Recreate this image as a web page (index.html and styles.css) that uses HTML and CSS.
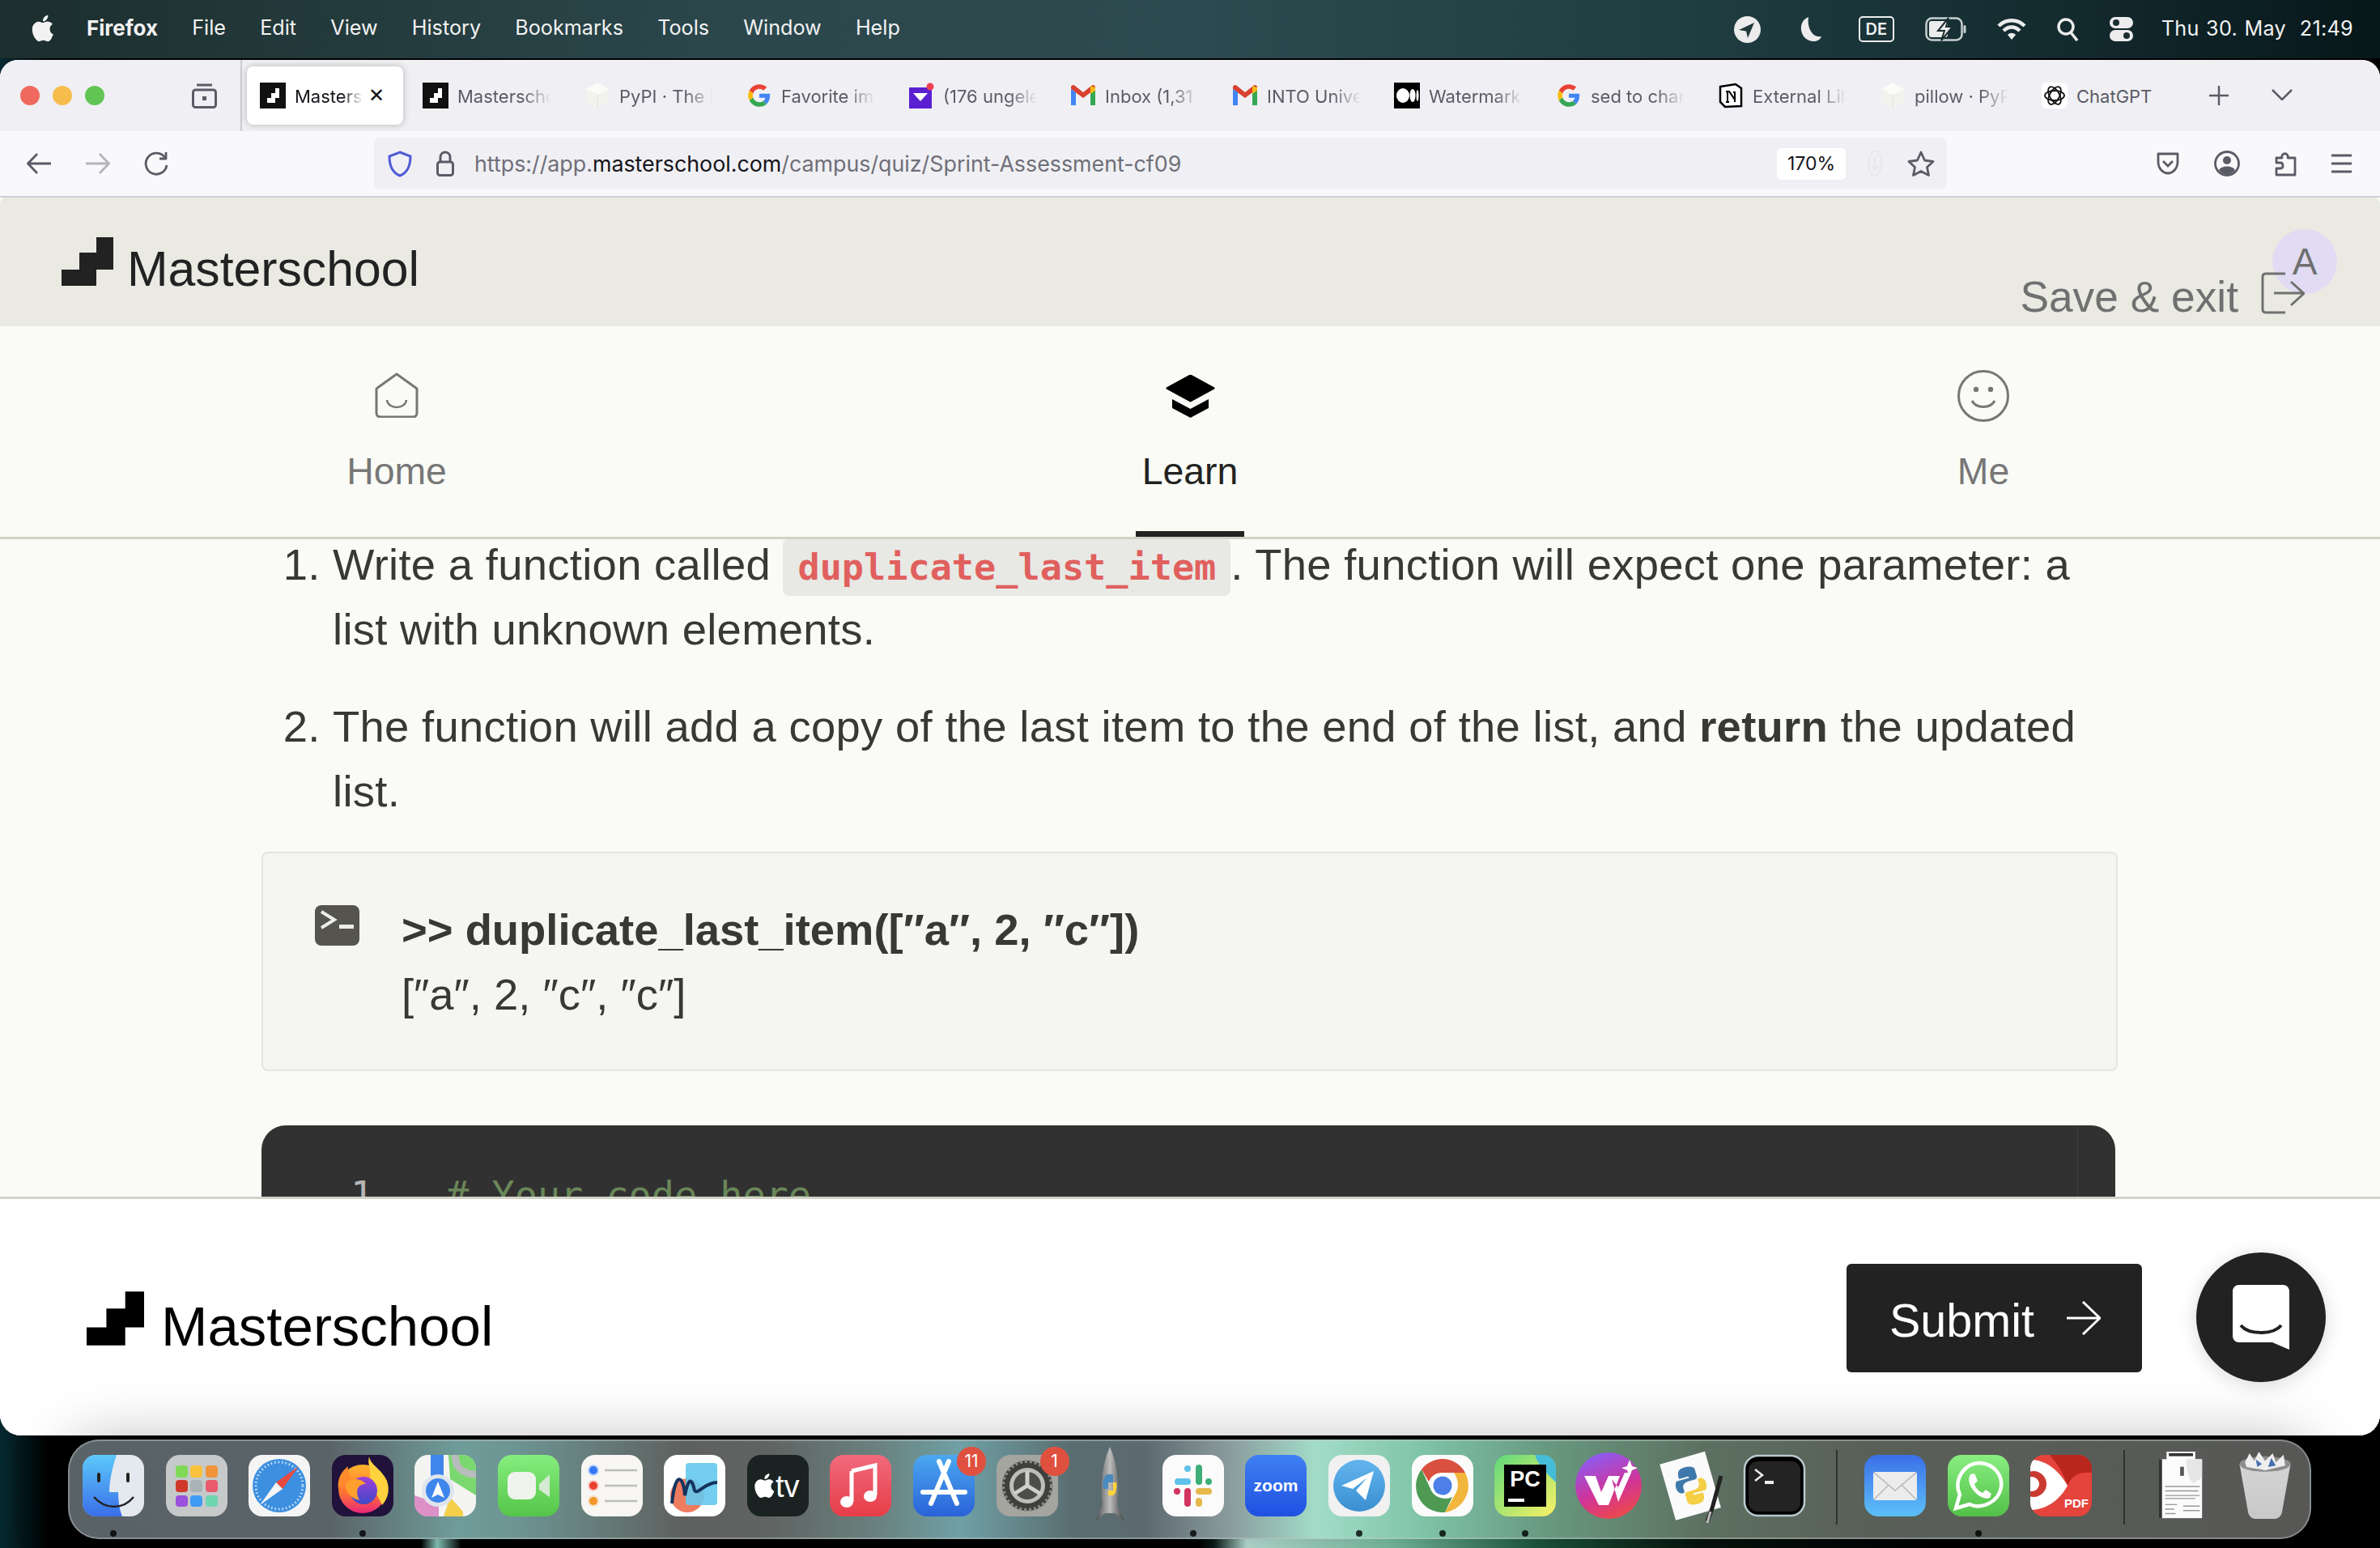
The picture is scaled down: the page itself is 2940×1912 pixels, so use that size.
FILE: index.html
```html
<!DOCTYPE html>
<html lang="en">
<head>
    <meta charset="UTF-8">
    <title>Masterschool - Sprint Assessment</title>
    <link rel="stylesheet" href="styles.css">
</head>
<body>
    <!-- shared icon shapes -->
    <svg class="icon-defs" width="0" height="0">
        <symbol id="stair" viewBox="0 0 64 60"><path d="M43 0H64V40H43V60H0V40H22V19H43Z"/></symbol>
        <symbol id="fav-ms" viewBox="0 0 32 32"><rect width="32" height="32" fill="#111"/><path d="M19 7h5v12h-5v6H9v-6h5v-6h5z" fill="#fff"/></symbol>
        <symbol id="fav-cube" viewBox="0 0 32 32"><path d="M16 0L30 8V24L16 32L2 24V8Z" fill="#f3f3ee"/><path d="M16 0L30 8L16 15L2 8Z" fill="#fbfbf8"/><path d="M16 15V32" stroke="#ddd" fill="none"/></symbol>
        <symbol id="fav-g" viewBox="-4 -4 56 56">
            <path fill="#EA4335" d="M24 9.5c3.54 0 6.71 1.22 9.21 3.6l6.85-6.85C35.9 2.38 30.47 0 24 0 14.62 0 6.51 5.38 2.56 13.22l7.98 6.19C12.43 13.72 17.74 9.5 24 9.5z"/>
            <path fill="#4285F4" d="M46.98 24.55c0-1.57-.15-3.09-.38-4.55H24v9.02h12.94c-.58 2.96-2.26 5.48-4.78 7.18l7.73 6c4.51-4.18 7.09-10.36 7.09-17.65z"/>
            <path fill="#FBBC05" d="M10.53 28.59c-.48-1.45-.76-2.99-.76-4.59s.27-3.14.76-4.59l-7.98-6.19C.92 16.46 0 20.12 0 24c0 3.88.92 7.54 2.56 10.78l7.97-6.19z"/>
            <path fill="#34A853" d="M24 48c6.48 0 11.93-2.13 15.89-5.81l-7.73-6c-2.15 1.45-4.92 2.3-8.16 2.3-6.26 0-11.57-4.22-13.47-9.91l-7.98 6.19C6.51 42.62 14.62 48 24 48z"/>
        </symbol>
        <symbol id="fav-gmail" viewBox="0 0 32 32">
            <path d="M1 8L16 19L31 8V6C31 3 28 2 26 4L16 12L6 4C4 2 1 3 1 6Z" fill="#d8412f"/>
            <path d="M1 8V28H7V12Z" fill="#4285f4"/><path d="M31 8V28H25V12Z" fill="#34a853"/><path d="M25 4L31 6V10L25 14Z" fill="#f6bb19"/>
        </symbol>
        <symbol id="apple" viewBox="0 0 24 24"><path d="M18.71 19.5c-.83 1.24-1.71 2.45-3.05 2.47-1.34.03-1.77-.79-3.29-.79-1.53 0-2 .77-3.27.82-1.31.05-2.3-1.32-3.14-2.53C4.25 17 2.94 12.45 4.7 9.39c.87-1.52 2.43-2.48 4.12-2.51 1.28-.02 2.5.87 3.29.87.78 0 2.21-1.07 3.73-.91.64.03 2.44.26 3.58 1.98-.09.06-2.14 1.25-2.12 3.73.03 2.97 2.61 3.96 2.64 3.97-.03.07-.42 1.44-1.38 2.83M13 3.5c.73-.83 1.94-1.46 2.94-1.5.13 1.17-.34 2.35-1.04 3.19-.69.85-1.83 1.51-2.95 1.42-.15-1.15.41-2.35 1.05-3.11z"/></symbol>
    </svg>

    <header class="menubar">
        <svg class="menu-apple" viewBox="3 1.500 18 21"><use href="#apple" width="24" height="24"/></svg>
        <nav class="menu-items">
            <span class="menu-app">Firefox</span>
            <span>File</span>
            <span>Edit</span>
            <span>View</span>
            <span>History</span>
            <span>Bookmarks</span>
            <span>Tools</span>
            <span>Window</span>
            <span>Help</span>
        </nav>
        <div class="status">
            <svg class="st-loc" viewBox="0 0 33 33"><circle cx="16.5" cy="16.5" r="16.5" fill="#ececec"/><path d="M25 8L6 17L15 18.5L17 27Z" fill="#22383a"/></svg>
            <svg class="st-moon" viewBox="0 0 28 32"><path d="M11 1C4 4 1 10 2 17C3 26 11 32 19 31C23 30.500 26 28 27 25C17 27 9 16 11 1Z" fill="#ececec"/></svg>
            <span class="st-de">DE</span>
            <svg class="st-batt" viewBox="0 0 51 30"><rect x="1.500" y="1.500" width="44" height="27" rx="7" fill="none" stroke="#c8cfcf" stroke-width="2.500"/><rect x="5" y="5" width="23" height="20" rx="3" fill="#ececec"/><rect x="47.500" y="10" width="3" height="10" rx="1.500" fill="#c8cfcf"/><path d="M29 1L16 17H24L20 29L34 12H26Z" fill="#ececec" stroke="#1a2d30" stroke-width="2"/></svg>
            <svg class="st-wifi" viewBox="0 0 36 28" fill="none" stroke="#ececec" stroke-width="4.500"><path d="M2 10C11 1 25 1 34 10"/><path d="M8 16C14 10 22 10 28 16"/><path d="M18 27L13 21C16 18 20 18 23 21Z" fill="#ececec" stroke="none"/></svg>
            <svg class="st-search" viewBox="0 0 27 30" fill="none" stroke="#ececec" stroke-width="3.500"><circle cx="11" cy="12" r="9"/><path d="M17 19L25 29"/></svg>
            <svg class="st-ctrl" viewBox="0 0 29 30"><rect width="29" height="14" rx="7" fill="#ececec"/><circle cx="8" cy="7" r="4" fill="#1a2d30"/><rect y="16" width="29" height="14" rx="7" fill="#ececec"/><circle cx="21" cy="23" r="4" fill="#1a2d30"/></svg>
            <span class="st-clock">Thu 30. May&nbsp;&nbsp;21:49</span>
        </div>
    </header>

    <div class="window">
        <div class="tabbar">
            <div class="tab-left">
                <div class="traffic">
                    <i class="dot-red"></i><i class="dot-yellow"></i><i class="dot-green"></i>
                </div>
                <svg class="fx-view" viewBox="0 0 31 31" fill="none" stroke="#5b5b66" stroke-width="3"><path d="M6 2H25"/><rect x="1.500" y="8" width="28" height="21.500" rx="3"/><rect x="13" y="16" width="5" height="5" fill="#5b5b66" stroke="none"/></svg>
            </div>
            <div class="tabs">
                <div class="tab tab-active"><svg class="fav"><use href="#fav-ms"/></svg><span class="tab-title">Masters</span><span class="tab-close">✕</span></div>
                <div class="tab"><svg class="fav"><use href="#fav-ms"/></svg><span class="tab-title">Masterscho</span></div>
                <div class="tab"><svg class="fav"><use href="#fav-cube"/></svg><span class="tab-title">PyPI · The P</span></div>
                <div class="tab"><svg class="fav"><use href="#fav-g"/></svg><span class="tab-title">Favorite im</span></div>
                <div class="tab"><svg class="fav" viewBox="0 0 32 32"><rect x="1" y="6" width="28" height="26" fill="#5a1fd1"/><path d="M6 13H24L15 23Z" fill="#fff"/><circle cx="27" cy="5" r="4.500" fill="#ef4056"/></svg><span class="tab-title">(176 ungele</span></div>
                <div class="tab"><svg class="fav"><use href="#fav-gmail"/></svg><span class="tab-title">Inbox (1,31</span></div>
                <div class="tab"><svg class="fav"><use href="#fav-gmail"/></svg><span class="tab-title">INTO Unive</span></div>
                <div class="tab"><svg class="fav" viewBox="0 0 32 32"><rect width="32" height="32" fill="#000"/><ellipse cx="11" cy="16" rx="8" ry="9" fill="#fff"/><ellipse cx="23" cy="16" rx="3.500" ry="8" fill="#fff"/><ellipse cx="29" cy="16" rx="1.500" ry="7" fill="#fff"/></svg><span class="tab-title">Watermark</span></div>
                <div class="tab"><svg class="fav"><use href="#fav-g"/></svg><span class="tab-title">sed to char</span></div>
                <div class="tab"><svg class="fav" viewBox="0 0 32 32"><path d="M3 5L22 2L29 7V29L9 30L3 24Z" fill="#fff" stroke="#000" stroke-width="2.500"/><path d="M10 11H14L21 21V12H19M10 11H13M12 11V24M10 24H14M22 12H19M21 21V24" fill="none" stroke="#000" stroke-width="2"/></svg><span class="tab-title">External Lil</span></div>
                <div class="tab"><svg class="fav"><use href="#fav-cube"/></svg><span class="tab-title">pillow · PyP</span></div>
                <div class="tab"><svg class="fav" viewBox="0 0 32 32"><rect width="32" height="32" rx="6" fill="#fff"/><g fill="none" stroke="#111" stroke-width="1.800"><ellipse cx="16" cy="16" rx="12" ry="6" transform="rotate(60 16 16)"/><ellipse cx="16" cy="16" rx="12" ry="6" transform="rotate(120 16 16)"/><ellipse cx="16" cy="16" rx="12" ry="6"/></g></svg><span class="tab-title tab-title-full">ChatGPT</span></div>
            </div>
            <svg class="tab-new" viewBox="0 0 26 26" stroke="#5b5b66" stroke-width="2.500"><path d="M13 1V25M1 13H25"/></svg>
            <svg class="tab-list" viewBox="0 0 26 14" fill="none" stroke="#5b5b66" stroke-width="2.500"><path d="M1 1L13 13L25 1"/></svg>
        </div>

        <div class="toolbar">
            <svg class="tool-back" viewBox="0 0 30 26" fill="none" stroke="#5b5b66" stroke-width="2.800"><path d="M30 13H2M13 1L1.500 13L13 25"/></svg>
            <svg class="tool-forward" viewBox="0 0 30 26" fill="none" stroke="#b4b4ba" stroke-width="2.800"><path d="M0 13H28M17 1L28.500 13L17 25"/></svg>
            <svg class="tool-reload" viewBox="0 0 30 30" fill="none" stroke="#5b5b66" stroke-width="2.800"><path d="M26 8A13 13 0 1 0 28 17"/><path d="M27 1V9H19" stroke-linejoin="round"/></svg>
            <div class="urlbar">
                <svg class="url-shield" viewBox="0 0 30 33" fill="none" stroke="#4f5bd5" stroke-width="3"><path d="M15 2L28 7C28 18 25 27 15 31C5 27 2 18 2 7Z"/></svg>
                <svg class="url-lock" viewBox="0 0 22 32" fill="none" stroke="#5b5b66" stroke-width="3"><path d="M5 14V8C5 0 17 0 17 8V14"/><rect x="1.500" y="14" width="19" height="16.500" rx="3"/></svg>
                <span class="url-text">https://app.<b>masterschool.com</b>/campus/quiz/Sprint-Assessment-cf09</span>
                <span class="url-zoom">170%</span>
                <svg class="url-faint" viewBox="0 0 18 32" fill="none" stroke="#e6e6ea" stroke-width="1.500"><ellipse cx="9" cy="16" rx="8" ry="15"/><path d="M9 8V24M5 19L9 25L13 19"/></svg>
                <svg class="url-star" viewBox="0 0 34 32" fill="none" stroke="#5b5b66" stroke-width="2.800" stroke-linejoin="round"><path d="M17 2L21.500 12L32 13.500L24.500 20.500L26.500 30.500L17 25.500L7.500 30.500L9.500 20.500L2 13.500L12.500 12Z"/></svg>
            </div>
            <div class="tool-right">
                <svg class="tool-pocket" viewBox="0 0 28 28" fill="none" stroke="#5b5b66" stroke-width="2.800"><path d="M2 2H26V12C26 20 20 26 14 26C8 26 2 20 2 12Z" stroke-linejoin="round"/><path d="M8 11L14 17L20 11"/></svg>
                <svg class="tool-account" viewBox="0 0 32 32" fill="none" stroke="#5b5b66" stroke-width="2.800"><circle cx="16" cy="16" r="14.500"/><circle cx="16" cy="12" r="5" fill="#5b5b66" stroke="none"/><path d="M6 24C9 18 23 18 26 24C22 31 10 31 6 24Z" fill="#5b5b66" stroke="none"/></svg>
                <svg class="tool-ext" viewBox="0 0 27 32" fill="none" stroke="#5b5b66" stroke-width="2.800" stroke-linejoin="round"><path d="M2 9H9C7 2 18 2 16 9H25V30H2V22H7C11 22 11 15 7 15H2Z"/></svg>
                <svg class="tool-menu" viewBox="0 0 25 24" stroke="#5b5b66" stroke-width="2.800"><path d="M0 2H25M0 12H25M0 22H25"/></svg>
            </div>
        </div>

        <div class="site">
            <div class="site-header">
                <div class="brand">
                    <svg class="brand-mark"><use href="#stair"/></svg>
                    <span class="brand-name">Masterschool</span>
                </div>
                <div class="save-exit">
                    <span>Save &amp; exit</span>
                    <svg class="save-icon" viewBox="0 0 54 52" fill="none" stroke="#707070" stroke-width="3"><path d="M30 2H6C3.500 2 2 3.500 2 6V46C2 48.500 3.500 50 6 50H30"/><path d="M16 26H52M37 12L53 26.500L37 41"/></svg>
                </div>
                <div class="avatar">A</div>
            </div>

            <nav class="site-nav">
                <a class="nav-item">
                    <span class="nav-icon">
                        <svg class="ic-home" viewBox="0 0 54 56" fill="none" stroke="#777" stroke-width="3"><path d="M27 2L52 20V50C52 53 50 55 47 55H7C4 55 2 53 2 50V20Z" stroke-linejoin="round"/><path d="M15 34C16 46 38 46 39 34" stroke-width="2.500"/></svg>
                    </span>
                    <span class="nav-label">Home</span>
                </a>
                <a class="nav-item nav-active">
                    <span class="nav-icon">
                        <svg class="ic-learn" viewBox="0 0 61 53"><path d="M30.500 1L59 16.500L30.500 32L2 16.500Z" stroke="#000" stroke-width="3" stroke-linejoin="round"/><path d="M8 30L30.500 42L53 30V41L30.500 53L8 41Z"/></svg>
                    </span>
                    <span class="nav-label">Learn</span>
                </a>
                <a class="nav-item">
                    <span class="nav-icon">
                        <svg class="ic-me" viewBox="0 0 64 64" fill="none" stroke="#777" stroke-width="3"><circle cx="32" cy="32" r="30.500"/><circle cx="23" cy="24" r="3.200" fill="#777" stroke="none"/><circle cx="41" cy="24" r="3.200" fill="#777" stroke="none"/><path d="M18 38C23 48 41 48 46 38"/></svg>
                    </span>
                    <span class="nav-label">Me</span>
                </a>
            </nav>

            <main class="content">
                <div class="content-scroll">
                    <ol class="steps">
                        <li>Write a function called <code class="inline-code">duplicate_last_item</code>. The function will expect one parameter: a list with unknown elements.</li>
                        <li>The function will add a copy of the last item to the end of the list, and <strong>return</strong> the updated list.</li>
                    </ol>
                    <div class="example">
                        <svg class="example-icon" viewBox="0 0 55 50"><rect width="55" height="50" rx="8" fill="#55544f"/><path d="M8 8L24 18L8 28" fill="none" stroke="#ecece8" stroke-width="4"/><rect x="30" y="24" width="18" height="5" fill="#ecece8"/></svg>
                        <div class="example-text">
                            <div class="example-in">&gt;&gt; duplicate_last_item([″a″, 2, ″c″])</div>
                            <div>[″a″, 2, ″c″, ″c″]</div>
                        </div>
                    </div>
                    <div class="editor">
                        <span class="line-no">1</span>
                        <span class="line-code"># Your code here</span>
                    </div>
                </div>
            </main>

            <footer class="site-footer">
                <div class="foot-brand">
                    <svg class="foot-mark"><use href="#stair"/></svg>
                    <span class="foot-name">Masterschool</span>
                </div>
                <button class="submit" type="button">
                    <span class="submit-label">Submit</span>
                    <svg class="submit-arrow" viewBox="0 0 42 42" fill="none" stroke="#fff" stroke-width="3"><path d="M0 21H41M20 1L41 21L20 41"/></svg>
                </button>
                <div class="chat-btn">
                    <svg viewBox="0 0 70 80"><path d="M8 0H62C66.500 0 70 3.500 70 8V80L49 71H8C3.500 71 0 67.500 0 63V8C0 3.500 3.500 0 8 0Z" fill="#fff"/><path d="M10 50C20 62 50 62 60 50" fill="none" stroke="#222" stroke-width="4"/></svg>
                </div>
            </footer>
        </div>
    </div>

    <div class="dock">
        <div class="app running">
            <svg viewBox="0 0 76 76"><defs><linearGradient id="finder" x1="0" y1="0" x2="0" y2="1"><stop offset="0" stop-color="#5cc8fa"/><stop offset="1" stop-color="#3a6fe8"/></linearGradient></defs><rect width="76" height="76" rx="17" fill="#e4e8ef"/><path d="M17 0H42C36 18 33 34 33 46H44C44 58 46 68 49 76H17C7 76 0 69 0 59V17C0 7 7 0 17 0Z" fill="url(#finder)"/><rect x="18" y="22" width="4" height="12" rx="2" fill="#222"/><rect x="54" y="22" width="4" height="12" rx="2" fill="#222"/><path d="M14 52C28 68 50 68 63 52" fill="none" stroke="#222" stroke-width="2.500"/></svg>
        </div>
        <div class="app">
            <svg viewBox="0 0 76 76"><rect width="76" height="76" rx="17" fill="#c5c9c9"/><rect x="12" y="13" width="15" height="15" rx="4" fill="#7ed957"/><rect x="30" y="13" width="15" height="15" rx="4" fill="#f9c23c"/><rect x="49" y="13" width="15" height="15" rx="4" fill="#f0943a"/><rect x="12" y="31" width="15" height="15" rx="4" fill="#cf3a2c"/><rect x="30" y="31" width="15" height="15" rx="4" fill="#a9b2b5"/><rect x="49" y="31" width="15" height="15" rx="4" fill="#ea5a6c"/><rect x="12" y="50" width="15" height="14" rx="4" fill="#9a52dc"/><rect x="30" y="50" width="15" height="14" rx="4" fill="#3f9bf5"/><rect x="49" y="50" width="15" height="14" rx="4" fill="#6fd4b0"/></svg>
        </div>
        <div class="app">
            <svg viewBox="0 0 76 76"><rect width="76" height="76" rx="17" fill="#f4f4f4"/><circle cx="38" cy="38" r="33" fill="#3d8fe0"/><circle cx="38" cy="38" r="29" fill="none" stroke="#cfe4f7" stroke-width="3" stroke-dasharray="1.500 3"/><path d="M62 14L34 34L42 42Z" fill="#e8493f"/><path d="M14 62L34 34L42 42Z" fill="#f5f5f5"/></svg>
        </div>
        <div class="app running">
            <svg viewBox="0 0 76 76"><defs><linearGradient id="fox" x1="0.500" y1="0" x2="0.500" y2="1"><stop offset="0" stop-color="#ffb52e"/><stop offset="0.600" stop-color="#ff6f33"/><stop offset="1" stop-color="#e8267a"/></linearGradient><linearGradient id="foxc" x1="0.500" y1="0" x2="0.500" y2="1"><stop offset="0" stop-color="#a03fd8"/><stop offset="1" stop-color="#3f4ac8"/></linearGradient></defs><rect width="76" height="76" rx="17" fill="#20123a"/><circle cx="38" cy="42" r="30" fill="url(#fox)"/><path d="M46 2C47 12 62 18 68 32C72 44 69 54 62 62L46 30C50 20 43 12 46 2Z" fill="#ffd23e"/><path d="M20 14C18 22 24 24 22 30C16 34 10 36 8 42C6 30 12 20 20 14Z" fill="#ff8a2b"/><circle cx="39" cy="44" r="17" fill="url(#foxc)"/><path d="M17 36C24 28 36 28 42 36C32 36 28 44 34 56C24 54 16 46 17 36Z" fill="#ffa02e"/></svg>
        </div>
        <div class="app">
            <svg viewBox="0 0 76 76"><rect width="76" height="76" rx="17" fill="#f4f4f2"/><path d="M42 0H59C69 0 76 7 76 17V50L44 30Z" fill="#7bd870"/><path d="M0 50V59C0 69 7 76 17 76H30V60Z" fill="#dd8fc8"/><path d="M36 76H60V70L44 52Z" fill="#f5cf4a"/><path d="M20 0H36V36H20Z" fill="#3f86ec"/><path d="M50 0C50 16 60 24 76 24" fill="none" stroke="#b9bcbc" stroke-width="9"/><circle cx="29" cy="44" r="20" fill="#dfe5ec"/><circle cx="29" cy="44" r="15" fill="#3f86ec"/><path d="M29 33L37 53L29 49L21 53Z" fill="#fff"/></svg>
        </div>
        <div class="app">
            <svg viewBox="0 0 76 76"><defs><linearGradient id="ft" x1="0" y1="0" x2="0" y2="1"><stop offset="0" stop-color="#86ee7e"/><stop offset="1" stop-color="#55c549"/></linearGradient></defs><rect width="76" height="76" rx="17" fill="url(#ft)"/><rect x="12" y="21" width="35" height="34" rx="9" fill="#eef4ec"/><path d="M51 36L64 24V52L51 43Z" fill="#d5ead2"/></svg>
        </div>
        <div class="app">
            <svg viewBox="0 0 76 76"><rect width="76" height="76" rx="17" fill="#f7f6f3"/><circle cx="15" cy="19" r="6" fill="#3478f6" stroke="#bcd4fa" stroke-width="2"/><circle cx="15" cy="38" r="6" fill="#e8402f" stroke="#f9cdc8" stroke-width="2"/><circle cx="15" cy="57" r="6" fill="#f0962b" stroke="#fbe0c0" stroke-width="2"/><path d="M29 19H69M29 38H69M29 57H69" stroke="#bdbdbd" stroke-width="2.500"/></svg>
        </div>
        <div class="app">
            <svg viewBox="0 0 76 76"><rect width="76" height="76" rx="17" fill="#fff"/><circle cx="29" cy="50" r="21" fill="#ee7c5e"/><rect x="27" y="10" width="39" height="52" rx="4" fill="#64c9f0" opacity="0.900"/><path d="M10 60C14 20 24 24 26 50C30 30 34 26 38 44C42 50 50 34 66 34" fill="none" stroke="#12345e" stroke-width="4"/></svg>
        </div>
        <div class="app">
            <svg viewBox="0 0 76 76"><rect width="76" height="76" rx="17" fill="#1a2321"/><svg x="8" y="22" width="27" height="32" viewBox="3 1.500 18 21" fill="#fff"><use href="#apple" width="24" height="24"/></svg><text x="35" y="52" class="svg-tv">tv</text></svg>
        </div>
        <div class="app">
            <svg viewBox="0 0 76 76"><defs><linearGradient id="music" x1="0" y1="0" x2="0" y2="1"><stop offset="0" stop-color="#f16a7c"/><stop offset="1" stop-color="#e63d48"/></linearGradient></defs><rect width="76" height="76" rx="17" fill="url(#music)"/><path d="M27 20L56 13V50" fill="none" stroke="#fff" stroke-width="5"/><path d="M27 20V58" fill="none" stroke="#fff" stroke-width="5"/><ellipse cx="21" cy="58" rx="8" ry="7" fill="#fff"/><ellipse cx="50" cy="51" rx="8" ry="7" fill="#fff"/></svg>
        </div>
        <div class="app">
            <svg viewBox="0 0 76 76"><defs><linearGradient id="store" x1="0" y1="0" x2="0" y2="1"><stop offset="0" stop-color="#4aa8f0"/><stop offset="1" stop-color="#2a62d8"/></linearGradient></defs><rect width="76" height="76" rx="17" fill="url(#store)"/><path d="M44 8L22 60M32 8L54 60M12 46H64" stroke="#fff" stroke-width="6" stroke-linecap="round"/></svg>
            <span class="badge">11</span>
        </div>
        <div class="app">
            <svg viewBox="0 0 76 76"><rect width="76" height="76" rx="17" fill="#a5a5a0"/><circle cx="38" cy="38" r="31" fill="#3f3f3e"/><circle cx="38" cy="38" r="30" fill="none" stroke="#8b8b88" stroke-width="4" stroke-dasharray="3 3"/><circle cx="38" cy="38" r="22" fill="#bdbdb9"/><circle cx="38" cy="38" r="17" fill="#4d4d4b"/><path d="M38 38L38 20M38 38L22 48M38 38L54 48" stroke="#cfcfcb" stroke-width="5"/></svg>
            <span class="badge">1</span>
        </div>
        <div class="app">
            <svg viewBox="0 0 76 76"><defs><linearGradient id="rocket" x1="0" y1="0" x2="1" y2="0"><stop offset="0" stop-color="#4a4a4a"/><stop offset="0.500" stop-color="#bdbdbd"/><stop offset="1" stop-color="#3f3f3f"/></linearGradient></defs><path d="M38 -10C48 12 50 40 47 62L56 82L44 72H32L20 82L29 62C26 40 28 12 38 -10Z" fill="url(#rocket)"/><path d="M34 24H42V34H36V42H30C28 34 30 28 34 24Z" fill="#4b8bbe"/><path d="M42 34V44H36V50H42C46 48 47 40 46 34Z" fill="#ffd43b"/></svg>
        </div>
        <div class="app running">
            <svg viewBox="0 0 76 76"><rect width="76" height="76" rx="17" fill="#fbfbfb"/><rect x="15" y="30" width="20" height="8" rx="4" fill="#5ec2ea" transform="translate(0 -1)"/><rect x="27" y="13" width="8" height="8" rx="4" fill="#5ec2ea"/><rect x="41" y="12" width="8" height="25" rx="4" fill="#3fae76"/><rect x="53" y="29" width="8" height="8" rx="4" fill="#3fae76"/><rect x="41" y="41" width="20" height="8" rx="4" fill="#e6b84c"/><rect x="41" y="53" width="8" height="11" rx="4" fill="#e6b84c"/><rect x="27" y="41" width="8" height="23" rx="4" fill="#d2355f"/><rect x="14" y="41" width="8" height="8" rx="4" fill="#d2355f"/></svg>
        </div>
        <div class="app">
            <svg viewBox="0 0 76 76"><defs><linearGradient id="zoomapp" x1="0" y1="0" x2="0" y2="1"><stop offset="0" stop-color="#3f80f2"/><stop offset="1" stop-color="#1f50e2"/></linearGradient></defs><rect width="76" height="76" rx="17" fill="url(#zoomapp)"/><text x="38" y="45" class="svg-zoom">zoom</text></svg>
        </div>
        <div class="app running">
            <svg viewBox="0 0 76 76"><defs><linearGradient id="tg" x1="0" y1="0" x2="0" y2="1"><stop offset="0" stop-color="#63b4ee"/><stop offset="1" stop-color="#3a8fd0"/></linearGradient></defs><rect width="76" height="76" rx="17" fill="#f1f1f1"/><circle cx="38" cy="38" r="32" fill="url(#tg)"/><path d="M56 20L16 38L30 42L48 28L34 44L46 56Z" fill="#fff"/></svg>
        </div>
        <div class="app running">
            <svg viewBox="0 0 76 76"><rect width="76" height="76" rx="17" fill="#fbfbfb"/><path d="M38 5C50 5 61 12 66 22H38C30 22 24 26 21 33L12 18C18 10 28 5 38 5Z" fill="#d9503f"/><path d="M66 22C72 34 71 48 63 58C58 65 49 70 41 71L55 46C58 40 58 31 52 22Z" fill="#f2b63c"/><path d="M12 18C3 30 3 46 11 57C17 66 29 72 41 71L50 52C42 56 30 54 24 44Z" fill="#4e9a53"/><circle cx="38" cy="38" r="15" fill="#fff"/><circle cx="38" cy="38" r="11.500" fill="#4c80e8"/></svg>
        </div>
        <div class="app running">
            <svg viewBox="0 0 76 76"><defs><linearGradient id="pycharm" x1="0" y1="0" x2="1" y2="1"><stop offset="0" stop-color="#5fd97a"/><stop offset="1" stop-color="#fbf066"/></linearGradient></defs><rect width="76" height="76" rx="17" fill="url(#pycharm)"/><path d="M50 0H59C69 0 76 7 76 17V34C62 20 54 12 50 0Z" fill="#45bcd8"/><rect x="12" y="12" width="52" height="52" fill="#000"/><text x="38" y="39" class="svg-pc">PC</text><rect x="17" y="54" width="20" height="4" fill="#fff"/></svg>
        </div>
        <div class="app">
            <svg class="app-big" viewBox="0 0 84 84"><defs><linearGradient id="wapp" x1="0.300" y1="0" x2="0.700" y2="1"><stop offset="0" stop-color="#8a5cf6"/><stop offset="0.550" stop-color="#d0349a"/><stop offset="1" stop-color="#ee4a45"/></linearGradient></defs><circle cx="42" cy="42" r="41" fill="url(#wapp)"/><path d="M12 30H26L33 50L42 30H56L42 66H30ZM46 34L54 62L70 26H62L54 44Z" fill="#fff"/><path d="M68 10L71 18L78 20L71 23L68 30L65 23L58 20L65 18Z" fill="#fff"/></svg>
        </div>
        <div class="app">
            <svg class="app-big" viewBox="0 0 84 84"><g transform="rotate(-16 42 42)"><rect x="12" y="6" width="58" height="72" fill="#fafafa"/><path d="M40 18C30 18 30 24 30 30H42V32H26C22 36 22 46 28 48H32V42C32 38 36 36 40 36H48C51 36 52 34 52 32V24C52 20 46 18 40 18Z" fill="#3f79ab"/><path d="M44 66C54 66 54 60 54 54H42V52H58C62 48 62 38 56 36H52V42C52 46 48 48 44 48H36C33 48 32 50 32 52V60C32 64 38 66 44 66Z" fill="#f4cf46"/></g><path d="M79 30L68 70L62 86" fill="none" stroke="#222" stroke-width="5"/><path d="M66 74L62 88" stroke="#bbb" stroke-width="3"/></svg>
        </div>
        <div class="app">
            <svg viewBox="0 0 76 76"><rect x="1" y="1" width="74" height="74" rx="17" fill="#000" stroke="#b8c8cc" stroke-width="2.500"/><rect x="6" y="8" width="64" height="62" rx="11" fill="#232323"/><path d="M14 18L23 25L14 32" fill="none" stroke="#eee" stroke-width="2.500"/><rect x="26" y="32" width="11" height="4" fill="#eee"/></svg>
        </div>
        <i class="dock-sep"></i>
        <div class="app">
            <svg viewBox="0 0 76 76"><defs><linearGradient id="mail" x1="0" y1="0" x2="0" y2="1"><stop offset="0" stop-color="#3b6fe8"/><stop offset="1" stop-color="#5cc0f8"/></linearGradient></defs><rect width="76" height="76" rx="17" fill="url(#mail)"/><rect x="11" y="21" width="54" height="35" rx="3" fill="#ececec"/><path d="M12 22L38 44L64 22M12 55L30 37M64 55L46 37" fill="none" stroke="#b6b6b6" stroke-width="1.500"/></svg>
        </div>
        <div class="app running">
            <svg viewBox="0 0 76 76"><defs><linearGradient id="wa" x1="0" y1="0" x2="0" y2="1"><stop offset="0" stop-color="#88ee80"/><stop offset="1" stop-color="#52c048"/></linearGradient></defs><rect width="76" height="76" rx="17" fill="url(#wa)"/><path d="M10 66L15 49C6 30 22 9 40 10C58 11 68 26 66 40C63 58 42 68 27 61Z" fill="none" stroke="#fff" stroke-width="4.500"/><path d="M28 24L33 23L37 32L33 36C35 42 39 45 43 47L47 43L54 48L52 53C42 58 20 38 28 24Z" fill="#fff"/></svg>
        </div>
        <div class="app">
            <svg viewBox="0 0 76 76"><defs><clipPath id="pdfclip"><rect width="76" height="76" rx="17"/></clipPath></defs><g clip-path="url(#pdfclip)"><rect width="76" height="76" fill="#e5443c"/><path d="M24 0H76V22C58 20 50 28 46 38C38 14 28 6 24 0Z" fill="#b9261d"/><path d="M0 6C20 6 36 20 46 38C36 56 20 68 0 68Z" fill="#fff"/><circle cx="4" cy="36" r="16" fill="#c93a31"/><circle cx="2" cy="36" r="9" fill="#fff"/></g><text x="57" y="65" class="svg-pdf">PDF</text></svg>
        </div>
        <i class="dock-sep"></i>
        <div class="app">
            <svg class="app-big" viewBox="0 0 60 90"><rect x="10" y="0" width="38" height="12" fill="#fff"/><rect x="13" y="2" width="32" height="4" fill="#333"/><rect x="1" y="10" width="56" height="78" fill="#fbfbfb"/><rect x="0" y="10" width="4" height="78" fill="#333"/><path d="M36 10H57V34L46 42C40 38 36 28 36 10Z" fill="#e6e6e6"/><rect x="28" y="20" width="5" height="12" fill="#555"/><path d="M8 46H54M8 52H52M8 58H54M8 62H48M8 70H24M8 76H20M32 72H54M32 78H54M8 82H22" stroke="#999" stroke-width="1.500"/></svg>
        </div>
        <div class="app">
            <svg class="app-big" viewBox="0 0 68 88"><defs><linearGradient id="trash" x1="0" y1="0" x2="0" y2="1"><stop offset="0" stop-color="#d4d4d4"/><stop offset="1" stop-color="#c8c8c8"/></linearGradient></defs><path d="M1 16L12 78C13 84 18 87 22 87H46C50 87 55 84 56 78L67 16Z" fill="url(#trash)"/><ellipse cx="34" cy="16" rx="33" ry="10" fill="#8e8e8e"/><path d="M8 14L14 2L20 12L26 0L34 12L44 2L48 14L58 4L60 18L34 24L10 20Z" fill="#eee"/><path d="M22 10L30 16L24 20ZM42 8L48 18L38 20Z" fill="#4a6fb0"/></svg>
        </div>
    </div>
</body>
</html>
```

FILE: styles.css
```css
* {
    box-sizing: border-box;
}
html, body {
    margin: 0;
    padding: 0;
}
body {
    width: 2940px;
    height: 1912px;
    overflow: hidden;
    font-family: "Liberation Sans", Arial, sans-serif;
    background:
        linear-gradient(90deg, #062a32 0, #000 60px, #000 520px, #8fd3c6 540px, #000 570px, #000 1480px, #0c1e1a 1500px, #bfe8dc 1540px, #7cc4a8 1720px, #1d5a40 1900px, #06140e 2100px, #000 2400px) bottom / 100% 11px no-repeat,
        linear-gradient(90deg, #062a32 0, #000 60px, #000 2940px);
}
.icon-defs {
    position: absolute;
}

/* mac menu bar */
.menubar {
    height: 72px;
    display: flex;
    align-items: center;
    padding-left: 38px;
    color: #f2f2f2;
    font-family: Inter, "Liberation Sans", sans-serif;
    font-size: 25.2px;
    background: linear-gradient(90deg, #1c2e2d 0, #2b474c 30%, #2d4a50 50%, #1f3c41 72%, #132a2e 87%, #07171a 100%);
}
.menu-apple {
    width: 30px;
    height: 34px;
    margin-top: -2px;
    fill: #f2f2f2;
}
.menu-items {
    display: flex;
    gap: 42.2px;
    margin: -3px 0 0 39px;
}
.menu-app {
    font-size: 26px;
    font-weight: 700;
}
.status {
    margin-left: auto;
    padding-right: 33px;
    display: flex;
    align-items: center;
    gap: 38px;
}
.st-loc { width: 33px; height: 33px; }
.st-moon { width: 28px; height: 32px; margin-left: 10px; }
.st-de {
    width: 44px;
    height: 32px;
    margin-left: 7px;
    border: 2px solid #ececec;
    border-radius: 5px;
    font-size: 20px;
    font-weight: 600;
    line-height: 28px;
    text-align: center;
}
.st-batt { width: 51px; height: 30px; }
.st-wifi { width: 36px; height: 28px; }
.st-search { width: 27px; height: 30px; }
.st-ctrl { width: 29px; height: 30px; }
.st-clock {
    margin: -3px 0 0 -3px;
    letter-spacing: 0.3px;
    word-spacing: 1px;
}

/* browser */
.window {
    margin-top: 2px;
    height: 1699px;
    display: flex;
    flex-direction: column;
    overflow: hidden;
    border-radius: 22px 22px 26px 26px;
    background: #fff;
}
.tabbar {
    height: 88px;
    flex: none;
    display: flex;
    align-items: center;
    background: #f0f0f4;
    font-family: Inter, "Liberation Sans", sans-serif;
}
.tab-left {
    width: 299px;
    height: 88px;
    flex: none;
    display: flex;
    align-items: center;
    padding-left: 25px;
    border-right: 2px solid #c9c9cf;
}
.traffic {
    display: flex;
    gap: 16px;
}
.traffic i {
    width: 24px;
    height: 24px;
    border-radius: 50%;
}
.dot-red { background: #f0695e; }
.dot-yellow { background: #f7bd4c; }
.dot-green { background: #61c554; }
.fx-view {
    width: 31px;
    height: 31px;
    margin-left: 108px;
}
.tabs {
    display: flex;
    gap: 7px;
    margin-left: 6px;
}
.tab {
    width: 193px;
    height: 72px;
    display: flex;
    align-items: center;
    gap: 11px;
    padding-left: 17px;
    font-size: 22px;
    color: #5b5b66;
    border-radius: 8px;
}
.tab-active {
    background: #fff;
    color: #15141a;
    box-shadow: 0 0 8px rgba(0, 0, 0, 0.25);
    padding-left: 16px;
}
.fav {
    width: 32px;
    height: 32px;
    flex: none;
}
.tab-title {
    width: 116px;
    margin-top: 2px;
    overflow: hidden;
    white-space: nowrap;
    -webkit-mask-image: linear-gradient(90deg, #000 70%, transparent);
    mask-image: linear-gradient(90deg, #000 70%, transparent);
}
.tab-active .tab-title {
    width: 84px;
}
.tab-title-full {
    -webkit-mask-image: none;
    mask-image: none;
}
.tab-close {
    margin-left: -4px;
    font-size: 24px;
    font-family: "DejaVu Sans", sans-serif;
}
.tab-new {
    width: 26px;
    height: 26px;
    margin-left: 30px;
}
.tab-list {
    width: 26px;
    height: 14px;
    margin-left: 52px;
    margin-top: -2px;
}
.toolbar {
    height: 82px;
    flex: none;
    display: flex;
    align-items: center;
    padding-left: 33px;
    background: #f9f9fb;
    border-bottom: 2px solid #cfcfd6;
}
.tool-back, .tool-forward { width: 30px; height: 26px; }
.tool-forward { margin-left: 43px; }
.tool-reload { width: 30px; height: 30px; margin-left: 42px; }
.urlbar {
    width: 1943px;
    height: 64px;
    margin-left: 254px;
    display: flex;
    align-items: center;
    padding: 0 15px 0 17px;
    background: #f0f0f4;
    border-radius: 8px;
    font-family: Inter, "Liberation Sans", sans-serif;
}
.url-shield { width: 30px; height: 33px; }
.url-lock { width: 22px; height: 32px; margin-left: 30px; }
.url-text {
    margin-left: 25px;
    font-size: 26.8px;
    color: #6f6f78;
}
.url-text b {
    font-weight: 400;
    color: #15141a;
}
.url-zoom {
    width: 85px;
    height: 39px;
    margin-left: auto;
    background: #fff;
    border-radius: 5px;
    font-size: 23px;
    line-height: 39px;
    text-align: center;
    color: #15141a;
}
.url-faint { width: 18px; height: 32px; margin-left: 27px; }
.url-star { width: 34px; height: 32px; margin-left: 31px; }
.tool-right {
    margin-left: auto;
    padding-right: 35px;
    display: flex;
    align-items: center;
    gap: 43px;
}
.tool-pocket { width: 28px; height: 28px; }
.tool-account { width: 32px; height: 32px; }
.tool-ext { width: 27px; height: 32px; }
.tool-menu { width: 25px; height: 24px; }

/* masterschool page */
.site {
    flex: 1;
    min-height: 0;
    display: flex;
    flex-direction: column;
    background: #fafbf6;
    color: #383834;
}
.site-header {
    position: relative;
    height: 159px;
    flex: none;
    display: flex;
    align-items: flex-start;
    background: #eaeae3;
    border-radius: 8px 8px 0 0;
}
.brand {
    display: flex;
    align-items: baseline;
    gap: 17px;
    margin: 49px 0 0 76px;
    color: #222;
}
.brand-mark {
    width: 64px;
    height: 60px;
    fill: #222;
}
.brand-name {
    font-size: 60.7px;
    line-height: 60px;
}
.save-exit {
    position: relative;
    z-index: 1;
    margin: 92px 93px 0 auto;
    height: 52px;
    display: flex;
    align-items: flex-end;
    gap: 28px;
    font-size: 53.3px;
    line-height: 43px;
    color: #707070;
}
.save-icon {
    width: 54px;
    height: 52px;
}
.avatar {
    position: absolute;
    top: 39px;
    right: 53px;
    width: 80px;
    height: 80px;
    border-radius: 50%;
    background: #e1dcf3;
    color: #707070;
    font-size: 46px;
    line-height: 80px;
    text-align: center;
}
.site-nav {
    height: 263px;
    flex: none;
    display: grid;
    grid-template-columns: repeat(3, 1fr);
    border-bottom: 3px solid #d2d3c6;
}
.nav-item {
    position: relative;
    display: flex;
    flex-direction: column;
    align-items: center;
    padding-top: 54px;
    color: #777;
}
.nav-icon {
    height: 64px;
    display: flex;
    align-items: center;
}
.ic-home { width: 54px; height: 56px; margin-top: -2px; }
.ic-learn { width: 61px; height: 53px; }
.ic-me { width: 64px; height: 64px; }
.nav-label {
    margin-top: 31px;
    font-size: 46.4px;
    line-height: 60px;
}
.nav-active {
    color: #222;
}
.nav-active::after {
    content: "";
    position: absolute;
    bottom: 0;
    left: 50%;
    width: 134px;
    height: 7px;
    margin-left: -67px;
    background: #222;
}
.content {
    flex: 1;
    min-height: 0;
    overflow: hidden;
}
.content-scroll {
    margin-top: -8px;
    padding: 0 324px 0 323px;
    font-size: 54.4px;
    line-height: 80px;
}
.steps {
    margin: 0;
    padding: 0 0 0 88px;
    letter-spacing: 0.3px;
}
.steps li {
    margin-bottom: 40px;
}
.inline-code {
    padding: 9px 18px;
    border-radius: 8px;
    background: #e8e9e5;
    color: #e0605e;
    font-family: "DejaVu Sans Mono", "Liberation Mono", monospace;
    font-size: 45.2px;
    font-weight: 700;
    line-height: 1;
    letter-spacing: 0;
}
.example {
    height: 271px;
    margin-top: -6px;
    display: flex;
    gap: 52px;
    padding: 55px 0 0 64px;
    background: #f5f5f3;
    border: 2px solid #e4e4e2;
    border-radius: 8px;
}
.example-icon {
    width: 55px;
    height: 50px;
    flex: none;
    margin-top: 9px;
}
.example-in {
    font-weight: 700;
}
.editor {
    position: relative;
    width: 2290px;
    height: 300px;
    margin-top: 67px;
    display: flex;
    gap: 90px;
    padding: 56px 0 0 110px;
    background: #313131;
    border-radius: 30px 30px 0 0;
    font-family: "DejaVu Sans Mono", "Liberation Mono", monospace;
    font-size: 46.8px;
    line-height: 60px;
}
.editor::after {
    content: "";
    position: absolute;
    top: 0;
    bottom: 0;
    right: 46px;
    width: 1px;
    background: #3c3c3c;
}
.line-no {
    color: #b5b5b5;
}
.line-code {
    color: #6a8759;
}
.site-footer {
    position: relative;
    height: 295px;
    flex: none;
    display: flex;
    align-items: flex-start;
    padding: 80px 294px 0 107px;
    background: #fff;
    border-top: 3px solid #d2d3c6;
    color: #000;
}
.foot-brand {
    display: flex;
    align-items: baseline;
    gap: 21px;
    margin-top: 34px;
}
.foot-mark {
    width: 71px;
    height: 67px;
}
.foot-name {
    font-size: 69px;
    line-height: 67px;
}
.submit {
    width: 365px;
    height: 134px;
    margin-left: auto;
    display: flex;
    align-items: center;
    gap: 40px;
    padding: 0 0 0 53px;
    border: none;
    border-radius: 6px;
    background: #222;
    color: #fff;
    font-family: "Liberation Sans", Arial, sans-serif;
    font-size: 57.5px;
}
.submit-label {
    padding-top: 5px;
}
.submit-arrow {
    width: 42px;
    height: 42px;
}
.chat-btn {
    position: absolute;
    top: 66px;
    right: 67px;
    width: 160px;
    height: 160px;
    display: flex;
    align-items: center;
    justify-content: center;
    border-radius: 50%;
    background: #222;
    box-shadow: 0 4px 24px rgba(0, 0, 0, 0.15);
}
.chat-btn svg {
    width: 70px;
    height: 80px;
}

/* dock */
.dock {
    position: relative;
    z-index: 2;
    width: 2771px;
    height: 123px;
    margin: 5px 0 0 84px;
    display: flex;
    align-items: flex-start;
    gap: 26.6px;
    padding: 17px 0 0 16px;
    border: 2px solid rgba(190, 200, 200, 0.45);
    border-radius: 38px;
    box-shadow: 0 0 70px rgba(0, 0, 0, 0.27);
    background: linear-gradient(90deg, #596266 0, #5a6367 320px, #6f9c9a 480px, #6c9391 560px, #5e605e 760px, #5f6361 860px, #6a8280 1000px, #6fa0a5 1100px, #5a6d70 1240px, #5d6a70 1330px, #8a9a9c 1430px, #a2dcc8 1540px, #7fc4a8 1670px, #689a80 1820px, #5d7060 2020px, #596058 2220px, #575756 2771px);
}
.app {
    position: relative;
    width: 76px;
    height: 76px;
    flex: none;
    display: flex;
    align-items: center;
    justify-content: center;
}
.app > svg {
    width: 76px;
    height: 76px;
    flex: none;
    overflow: visible;
}
.app > svg.app-big {
    width: 84px;
    height: 84px;
}
.app.running::after {
    content: "";
    position: absolute;
    left: 34px;
    bottom: -25px;
    width: 8px;
    height: 8px;
    border-radius: 50%;
    background: #000;
    opacity: 0.8;
}
.badge {
    position: absolute;
    top: -10px;
    right: -14px;
    min-width: 36px;
    height: 36px;
    border-radius: 50%;
    background: #e0503f;
    color: #fff;
    font-family: Inter, "Liberation Sans", sans-serif;
    font-size: 21px;
    line-height: 36px;
    text-align: center;
}
.dock-sep {
    width: 2px;
    height: 92px;
    flex: none;
    margin: -6px 6px 0 12px;
    background: #2a332e;
}
.svg-tv {
    font-family: "Liberation Sans", Arial, sans-serif;
    font-size: 38px;
    fill: #fff;
}
.svg-zoom {
    font-family: "Liberation Sans", Arial, sans-serif;
    font-size: 21px;
    font-weight: 700;
    fill: #fff;
    text-anchor: middle;
}
.svg-pc {
    font-family: "Liberation Sans", Arial, sans-serif;
    font-size: 27px;
    font-weight: 700;
    fill: #fff;
    text-anchor: middle;
}
.svg-pdf {
    font-family: "Liberation Sans", Arial, sans-serif;
    font-size: 15px;
    font-weight: 700;
    fill: #fff;
    text-anchor: middle;
}
```
